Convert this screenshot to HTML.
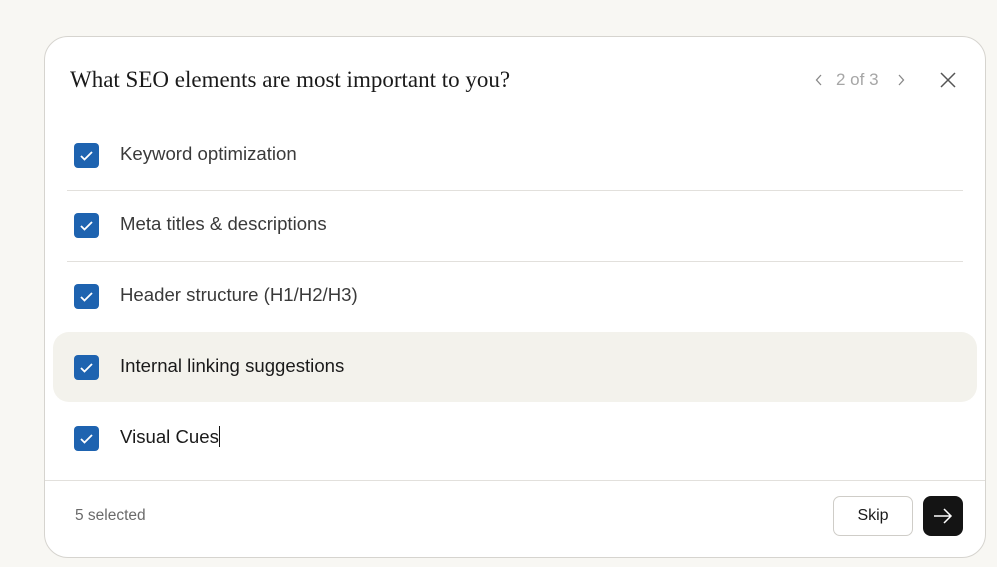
<!DOCTYPE html>
<html><head><style>
*{margin:0;padding:0;box-sizing:border-box}
body{width:997px;height:567px;background:#f8f7f3;font-family:"Liberation Sans",sans-serif;position:relative;overflow:hidden}
.card{position:absolute;left:44px;top:36px;width:942px;height:522px;background:#fff;border:1px solid #d6d4cf;border-radius:24px;overflow:hidden}
.title{position:absolute;left:25px;top:30px;font-family:"Liberation Serif",serif;font-size:23px;color:#1a1a1a}
.nav{position:absolute;left:791px;top:33px;font-size:17px;color:#a6a6a6}
.row{position:absolute;left:8px;width:924px;height:70px}
.row .cb{position:absolute;left:21px;top:23px;width:25px;height:25px;background:#1e63b0;border-radius:4px}
.row .cb svg{position:absolute;left:5px;top:6px}
.row .t{position:absolute;left:67px;top:23px;font-size:18.6px;color:#3a3a3a}
.div{position:absolute;left:22px;width:896px;height:1px;background:#e2e0dc}
.foot{position:absolute;left:0;top:443px;width:100%;height:1px;background:#e2e0dc}
</style></head><body>
<div class="card">
<div class="title">What SEO elements are most important to you?</div>
<svg style="position:absolute;left:770px;top:37px" width="8" height="12" viewBox="0 0 8 12"><path d="M6 1L1.5 6 6 11" stroke="#888" stroke-width="1.3" fill="none"/></svg>
<div class="nav">2 of 3</div>
<svg style="position:absolute;left:852px;top:37px" width="8" height="12" viewBox="0 0 8 12"><path d="M2 1L6.5 6 2 11" stroke="#888" stroke-width="1.3" fill="none"/></svg>
<svg style="position:absolute;left:895px;top:35px" width="16" height="16" viewBox="0 0 16 16"><path d="M1 1L15 15M15 1L1 15" stroke="#555" stroke-width="1.5"/></svg>
<div class="row" style="top:83px"><div class="cb"><svg width="15" height="13" viewBox="0 0 15 13"><path d="M2 7l3.5 3.5L13 3" stroke="#fff" stroke-width="1.8" fill="none"/></svg></div><div class="t">Keyword optimization</div></div>
<div class="div" style="top:153px"></div>
<div class="row" style="top:153px"><div class="cb"><svg width="15" height="13" viewBox="0 0 15 13"><path d="M2 7l3.5 3.5L13 3" stroke="#fff" stroke-width="1.8" fill="none"/></svg></div><div class="t">Meta titles &amp; descriptions</div></div>
<div class="div" style="top:224px"></div>
<div class="row" style="top:224px"><div class="cb"><svg width="15" height="13" viewBox="0 0 15 13"><path d="M2 7l3.5 3.5L13 3" stroke="#fff" stroke-width="1.8" fill="none"/></svg></div><div class="t">Header structure (H1/H2/H3)</div></div>
<div class="row" style="top:295px;background:#f3f2ec;border-radius:16px;height:70px"><div class="cb"><svg width="15" height="13" viewBox="0 0 15 13"><path d="M2 7l3.5 3.5L13 3" stroke="#fff" stroke-width="1.8" fill="none"/></svg></div><div class="t" style="color:#1a1a1a">Internal linking suggestions</div></div>
<div class="row" style="top:366px"><div class="cb"><svg width="15" height="13" viewBox="0 0 15 13"><path d="M2 7l3.5 3.5L13 3" stroke="#fff" stroke-width="1.8" fill="none"/></svg></div><div class="t" style="color:#1a1a1a">Visual Cues<span style="display:inline-block;width:1px;height:21px;background:#111;vertical-align:-4px"></span></div></div>
<div class="foot"></div>
<div style="position:absolute;left:30px;top:470px;font-size:15.5px;color:#6a6a6a">5 selected</div>
<div style="position:absolute;left:788px;top:459px;width:80px;height:40px;border:1px solid #cfcdc8;border-radius:7px;font-size:16px;color:#1a1a1a;text-align:center;line-height:38px">Skip</div>
<div style="position:absolute;left:878px;top:459px;width:40px;height:40px;background:#141414;border-radius:8px"><svg style="position:absolute;left:10px;top:11px" width="20" height="18" viewBox="0 0 20 18"><path d="M1 9H18M11 2l7 7-7 7" stroke="#fff" stroke-width="1.5" fill="none"/></svg></div>
</div>
</body></html>
